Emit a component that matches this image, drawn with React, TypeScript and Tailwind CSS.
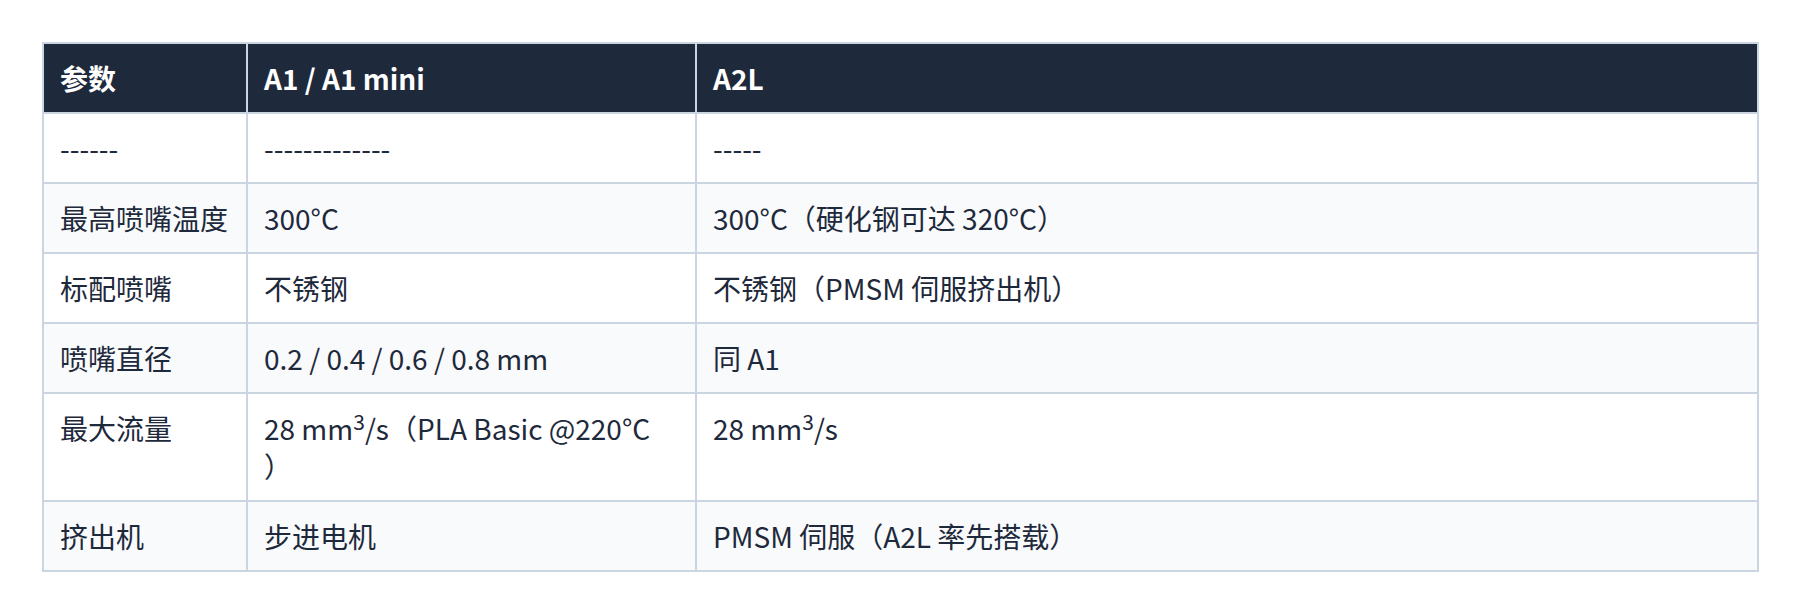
import React from "react";

const rows: React.ReactNode[][] = [
  ["------", "-------------", "-----"],
  ["最高喷嘴温度", "300°C", "300°C（硬化钢可达 320°C）"],
  ["标配喷嘴", "不锈钢", "不锈钢（PMSM 伺服挤出机）"],
  ["喷嘴直径", "0.2 / 0.4 / 0.6 / 0.8 mm", "同 A1"],
  [
    "最大流量",
    <>
      28 mm<sup>3</sup>/s（PLA Basic @220°C
      <br />）
    </>,
    <>
      28 mm<sup>3</sup>/s
    </>,
  ],
  ["挤出机", "步进电机", "PMSM 伺服（A2L 率先搭载）"],
];

export default function App() {
  return (
    <div
      className="bg-white pl-[42px] pr-[41px] pt-[42px] pb-[42px]"
      style={{ fontFamily: '"Noto Sans CJK SC", "Noto Sans", sans-serif' }}
    >
      <table className="w-full table-fixed border-collapse border-2 border-[#cbd5e1] text-[28px] leading-[38px] text-[#1e293b]">
        <colgroup>
          <col className="w-[204px]" />
          <col className="w-[449px]" />
          <col />
        </colgroup>
        <thead>
          <tr className="bg-[#1e293b] text-white">
            <th className="border-2 border-[#cbd5e1] px-4 py-[15px] text-left font-bold">参数</th>
            <th className="border-2 border-[#cbd5e1] px-4 py-[15px] text-left font-bold">A1 / A1 mini</th>
            <th className="border-2 border-[#cbd5e1] px-4 py-[15px] text-left font-bold">A2L</th>
          </tr>
        </thead>
        <tbody>
          {rows.map((r, i) => (
            <tr key={i} className={i % 2 === 1 ? "bg-[#f8fafc]" : "bg-white"}>
              {r.map((c, j) => (
                <td key={j} className="border-2 border-[#cbd5e1] px-4 py-[15px] align-top">
                  {c}
                </td>
              ))}
            </tr>
          ))}
        </tbody>
      </table>
    </div>
  );
}
